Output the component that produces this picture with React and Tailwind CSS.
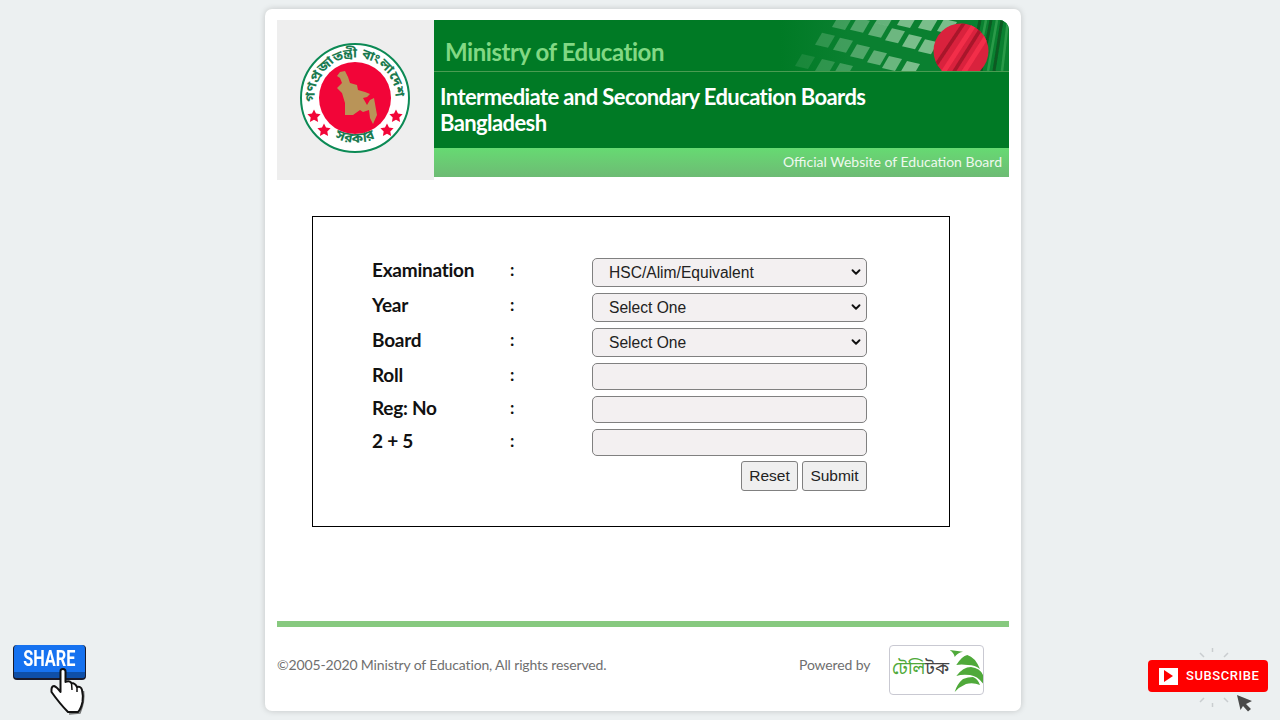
import React from "react";
import { ChevronDown } from "lucide-react";

const lato = { fontFamily: "Lato, sans-serif" };
const arial = { fontFamily: '"Liberation Sans", Arial, sans-serif' };
const bengali = { fontFamily: '"Noto Sans Bengali", "Noto Sans", sans-serif' };

const star = "l2 4.1 4.6 .6 -3.3 3.2 .8 4.6 -4.1 -2.2 -4.1 2.2 .8 -4.6 -3.3 -3.2 4.6 -.6 Z";

const Emblem = () => (
  <svg width="110" height="110" viewBox="0 0 110 110">
    <defs>
      <path id="emblem-top" d="M15.5 64 A40.5 40.5 0 1 1 94.5 64" />
      <path id="emblem-bottom" d="M16 78 A46 46 0 0 0 94 78" />
    </defs>
    <circle cx="55" cy="55" r="54" fill="#fff" stroke="#0c8a55" strokeWidth="2" />
    <text fill="#1a7a50" fontSize="13" fontWeight="700" style={bengali}>
      <textPath href="#emblem-top" startOffset="5" textLength="130" lengthAdjust="spacingAndGlyphs">গণপ্রজাতন্ত্রী বাংলাদেশ</textPath>
    </text>
    <text fill="#1a7a50" fontSize="14" fontWeight="700" style={bengali} textAnchor="middle">
      <textPath href="#emblem-bottom" startOffset="50%">সরকার</textPath>
    </text>
    <circle cx="55" cy="55" r="36" fill="#f20538" />
    <path fill="#b99458" d="M40 29 L45 28 L48 34 L50 40 L57 42 L58 47 L65 49 L70 51 L67 54 L63 55 L67 62 L70 57 L74 55 L77 72 L73 81 L70 75 L69 67 L63 69 L60 67 L53 72 L45 72 L45 60 L42 50 L37 45 L42 40 L40 35 L37 33 Z" />
    <g fill="#f20538">
      <path d={`M14 66.5 ${star}`} />
      <path d={`M96 66.5 ${star}`} />
      <path d={`M24 80.5 ${star}`} />
      <path d={`M87 80.5 ${star}`} />
    </g>
  </svg>
);

const tiles = [
  [80, 4.7], [98, 9.7], [115, 15.3], [132, 21.3], [148, 26.3],
  [45, 19.7], [63, 24.7], [80, 31.3], [97, 37.3], [112, 43], [130, 48],
  [25, 41], [45, 46], [63, 50],
  [62, 2], [105, -2], [127, 0], [148, 3], [167, 6],
];

const BannerArt = () => (
  <svg width="229" height="51" viewBox="0 0 229 51" className="block">
    <defs>
      <linearGradient id="bg-fade" x1="0" x2="1" y1="0" y2="0">
        <stop offset="0" stopColor="#0a8030" stopOpacity="0" />
        <stop offset="0.3" stopColor="#0a8030" />
      </linearGradient>
      <clipPath id="flag"><circle cx="181" cy="31" r="27.5" /></clipPath>
      <filter id="soft"><feGaussianBlur stdDeviation="0.7" /></filter>
    </defs>
    <rect width="229" height="51" fill="url(#bg-fade)" />
    <g fill="#a6d6af" filter="url(#soft)">
      {tiles.map(([x, y], i) => (
        <path key={i} opacity={Math.min(0.72, (x / 130) * 0.72)} d={`M${x - 10} ${y + 5} L${x - 3} ${y - 7} L${x + 10} ${y - 4} L${x + 3} ${y + 8} Z`} />
      ))}
    </g>
    <g filter="url(#soft)">
      <path d="M200 0 L190 51 M211 0 L201 51 M222 0 L214 51" stroke="#0a5a22" strokeWidth="3" />
      <path d="M206 0 L196 51 M217 0 L208 51 M228 0 L222 51" stroke="#2c9a48" strokeWidth="2.5" />
      <circle cx="181" cy="31" r="27.5" fill="#d9203c" />
      <g clipPath="url(#flag)">
        <path d="M152 51 L186 0 M170 58 L204 4" stroke="#a8162c" strokeWidth="3.5" />
        <path d="M162 54 L196 2 M180 58 L212 8" stroke="#f22d48" strokeWidth="5" />
      </g>
    </g>
  </svg>
);

const Swoosh = () => (
  <svg width="36" height="46" viewBox="0 0 36 46" className="shrink-0">
    <g fill="#4fa93a">
      <path d="M0.7 3 L14 4.7 Q8 6 5.7 10 Q5 6 0.7 3 Z" />
      <path d="M7.3 18 Q13 9 18.3 8 Q26 10 31 22 Q26 18 19 18 Q12 17 7.3 18 Z" />
      <path d="M7.3 29 Q14 20 22 20 Q31 21 34 28 L35 38 Q29 29 21 28 Q13 27 7.3 29 Z" />
      <path d="M5.7 45 Q8 37 14 32 Q19 30 24 30 Q29 32 31 38 Q24 35 17 37 Q10 40 5.7 45 Z" />
    </g>
  </svg>
);

const ShareBadge = () => (
  <div className="fixed left-[13px] top-[645px] w-[80px] h-[72px]">
    <div className="w-[73px] h-[35px] rounded-[4px] bg-[#0f4fa8] border-b-2 border-l border-r border-[#1a1a2a] overflow-hidden">
      <div className="h-[27px] bg-[#1672f0] rounded-t-[4px] flex items-center justify-center text-white text-[22px] font-bold leading-none" style={{ fontFamily: "Roboto, sans-serif" }}>
        <span className="inline-block scale-x-[0.74]">SHARE</span>
      </div>
    </div>
    <svg width="45" height="50" viewBox="0 0 45 50" className="absolute left-[32px] top-[20px]">
      <path d="M15.5 6 Q15.5 4 18 4 Q20.5 4 20.5 6.5 L20.5 17 Q24 15 26.5 18 Q30 18 32 22 Q36 21 37 25 Q38.5 31 37.5 37 Q36 44 33 47 L23 47 Q15 39 6.5 27 Q6 21 9 21 Q12 22 15.5 27 Z" fill="#fff" stroke="#111" strokeWidth="2" strokeLinejoin="round" />
      <path d="M26.5 18 L27 25 M32 22 L32 27" stroke="#111" strokeWidth="1.5" fill="none" />
      <path d="M38.5 26 Q40 36 35 48 L24 49" stroke="#222" strokeWidth="1.5" fill="none" opacity="0.6" />
    </svg>
  </div>
);

const SubscribeBadge = () => (
  <div className="fixed left-[1148px] top-[648px] w-[120px] h-[64px]">
    <svg width="120" height="64" viewBox="0 0 120 64" className="absolute inset-0">
      <g stroke="#c9cdd0" strokeWidth="1.5">
        <path d="M64.5 0 V4 M52 5 L56 9 M80 5 L76 9 M52 54 L56 50 M64.5 55 V59 M80 54 L76 50" />
      </g>
      <path d="M89 47 L104 53 L98 56 L103 61 L100 63.5 L95 58 L92.5 62 Z" fill="#4a4a4a" />
    </svg>
    <div className="absolute left-0 top-[12px] w-[120px] h-[32px] rounded-[4px] bg-[#ff0000] flex items-center pl-[11px] gap-[8px]">
      <div className="w-[19px] h-[17px] bg-white flex items-center justify-center">
        <div className="w-0 h-0 border-y-[6px] border-y-transparent border-l-[9px] border-l-[#ff0000]" />
      </div>
      <span className="text-white text-[13px] font-medium tracking-[0.55px]" style={{ fontFamily: "Roboto, sans-serif" }}>SUBSCRIBE</span>
    </div>
  </div>
);

const Row = ({ label, children }) => (
  <div className="flex items-start">
    <div className="w-[138px] text-[19px] font-bold leading-[24px] text-[#111] tracking-[-0.25px]">{label}</div>
    <div className="w-[82px] text-[17px] font-bold leading-[24px] text-[#111]">:</div>
    {children}
  </div>
);

const Select = ({ value }) => (
  <div className="relative w-[275px] h-[29px]">
    <select className="appearance-none block w-full h-full pl-[16px] pt-[1px] bg-[#f3f0f1] border border-[#808080] rounded-[5px] text-[15.6px] text-[#222]" style={arial} defaultValue={value}>
      <option>{value}</option>
    </select>
    <ChevronDown size={14} strokeWidth={3.2} className="absolute right-[4px] top-[7px] text-[#111] pointer-events-none" />
  </div>
);

const inputCls = "block w-[275px] h-[27px] bg-[#f3f0f1] border border-[#808080] rounded-[5px]";
const btnCls = "h-[30px] bg-[#efefef] border border-[#808080] rounded-[3px] text-[15.5px] text-[#222]";

const App = () => {
  return (
    <div className="w-[1280px] h-[720px] bg-[#ecf0f1] overflow-hidden pt-[9px] pl-[265px]" style={lato}>
      <div className="w-[756px] h-[702px] bg-white rounded-[7px] shadow-[0_0_6px_rgba(0,0,0,0.18)] px-[12px] pt-[11px]">
        <div className="flex h-[160px]">
          <div className="w-[157px] h-[160px] bg-[#eeeeee] flex items-center justify-center pb-[4px] pr-[1px]">
            <Emblem />
          </div>
          <div className="w-[575px] h-[157px] rounded-tr-[10px] overflow-hidden flex flex-col">
            <div className="h-[51px] bg-[#007a25] flex justify-between">
              <div className="pl-[11px] pt-[17px] text-[24px] leading-[30px] font-bold text-[#82d884] tracking-[-0.45px] whitespace-nowrap">Ministry of Education</div>
              <BannerArt />
            </div>
            <div className="h-[77px] bg-[#007a25] border-t border-[#4a9c52] pl-[6px] pt-[12px] text-white text-[22px] font-bold leading-[26px] tracking-[-0.6px]">
              Intermediate and Secondary Education Boards<br />Bangladesh
            </div>
            <div className="h-[29px] bg-gradient-to-b from-[#66da72] to-[#6dbb74] text-right pr-[7px] pt-[5px] text-[14px] leading-[18px] text-[#eef8ee]">
              Official Website of Education Board
            </div>
          </div>
        </div>

        <div className="ml-[35px] mt-[36px] w-[638px] h-[311px] border border-black pl-[59px] pt-[41px] flex flex-col gap-[6px]">
          <Row label="Examination"><Select value="HSC/Alim/Equivalent" /></Row>
          <Row label="Year"><Select value="Select One" /></Row>
          <Row label="Board"><Select value="Select One" /></Row>
          <Row label="Roll"><input className={inputCls} /></Row>
          <Row label="Reg: No"><input className={inputCls} /></Row>
          <Row label="2 + 5"><input className={inputCls} /></Row>
          <div className="w-[495px] flex justify-end gap-[4px] -mt-[1px]" style={arial}>
            <button className={`${btnCls} w-[57px]`}>Reset</button>
            <button className={`${btnCls} w-[65px]`}>Submit</button>
          </div>
        </div>

        <div className="mt-[94px] h-[6px] bg-[#87c97f]" />
        <div className="flex items-start pt-[18px] text-[14px] text-[#6f6f6f] tracking-[-0.14px]">
          <div className="w-[522px] pt-[10px] leading-[20px]">©2005-2020 Ministry of Education, All rights reserved.</div>
          <div className="w-[90px] pt-[10px] leading-[20px]">Powered by</div>
          <div className="w-[95px] h-[50px] bg-white border border-[#c9c9d2] rounded-[4px] flex items-center overflow-hidden pl-[2px]">
            <span className="text-[17.5px] leading-none tracking-normal whitespace-nowrap" style={bengali}>
              <span className="text-[#4fa93a]">টেলি</span><span className="text-[#444]">টক</span>
            </span>
            <div className="ml-auto mr-[1px]"><Swoosh /></div>
          </div>
        </div>
      </div>

      <ShareBadge />
      <SubscribeBadge />
    </div>
  );
};

export default App;
